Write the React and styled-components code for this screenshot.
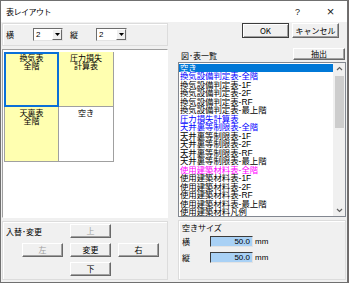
import React from 'react'
import styled, { createGlobalStyle } from 'styled-components'

const GlobalStyle = createGlobalStyle`
  html, body {
    margin: 0;
    padding: 0;
    background: #6f6a6a;
  }
  body {
    font-family: "Noto Sans CJK JP", "Liberation Sans", sans-serif;
  }
`

/*---------------------------------------------------------------
 *  Dialog frame: a white title bar over a grey body with two
 *  columns. Group boxes use an etched grey/white border.
 * -------------------------------------------------------------- */

const StWindow = styled.div`
  width: 346px;
  height: 281px;
  border: 1px solid #707070;
  background: #f0f0f0;
  display: flex;
  flex-direction: column;
  font-size: 8px;
  color: #000;
`

const StTitleBar = styled.div`
  height: 21px;
  background: #fff;
  display: flex;
  align-items: center;
  padding-left: 5px;
`

const StTitle = styled.span`
  font-size: 8px;
  letter-spacing: -0.5px;
`

const StCaptionButton = styled.span`
  width: 33px;
  text-align: center;
  font-size: ${props => props.size}px;
  font-family: "Liberation Sans", sans-serif;
  color: #222;
  margin-left: ${props => props.first ? 'auto' : '0'};
`

const StBody = styled.div`
  flex: 1;
  display: flex;
  padding-left: 1px;
  gap: 10px;
`

const StLeftColumn = styled.div`
  width: 166px;
  display: flex;
  flex-direction: column;
`

const StRightColumn = styled.div`
  width: 168px;
  display: flex;
  flex-direction: column;
`

const StGroup = styled.div`
  box-sizing: border-box;
  height: ${props => props.h}px;
  margin-top: ${props => props.mt}px;
  border: 1px solid #dcdcdc;
  box-shadow: inset 1px 1px 0 #fff;
`

const StSizeRow = styled.div`
  display: flex;
  align-items: center;
  height: 100%;
  padding-left: 3px;
`

const StLabel = styled.span`
  font-size: 8px;
  line-height: 9px;
  white-space: nowrap;
  margin-left: ${props => props.ml || 0}px;
  width: ${props => props.w ? props.w + 'px' : 'auto'};
`

const StSelect = styled.div`
  box-sizing: border-box;
  width: ${props => props.w}px;
  height: 13px;
  margin-left: ${props => props.ml}px;
  background: #fff;
  border: 1px solid;
  border-color: #6d6d6d #e3e3e3 #e3e3e3 #6d6d6d;
  display: flex;
  align-items: center;
  font-size: 8px;
  font-family: "Liberation Sans", sans-serif;
  padding-left: 2px;
`

const StDropArrow = styled.span`
  margin-left: auto;
  width: 10px;
  height: 11px;
  box-sizing: border-box;
  background: #f0f0f0;
  border: 1px solid;
  border-color: #fff #696969 #696969 #fff;
  display: flex;
  align-items: center;
  justify-content: center;
`

const StLayoutPanel = styled.div`
  box-sizing: border-box;
  height: 169px;
  margin-top: 3px;
  background: #fff;
  border: 1px solid;
  border-color: #a0a0a0 #fff #fff #a0a0a0;
  padding: 2px 0 0 1px;
`

const StCellGrid = styled.div`
  display: grid;
  grid-template-columns: 55px 55px;
  grid-template-rows: 55px 55px;
  width: 110px;
`

const StCell = styled.div`
  box-sizing: border-box;
  background: ${props => props.filled ? '#ffffb0' : '#fff'};
  border-right: 1px solid #a0a0a0;
  border-bottom: 1px solid #a0a0a0;
  border-left: ${props => props.edge ? '1px solid #a0a0a0' : 'none'};
  outline: ${props => props.active ? '2px solid #0a6fd8' : 'none'};
  outline-offset: -2px;
  text-align: center;
  font-size: 8px;
  line-height: 7.5px;
  padding-top: 2px;
  white-space: pre-line;
`

const StSwapGroup = styled(StGroup)`
  display: grid;
  grid-template-columns: 9px 41px 41px 41px;
  grid-template-rows: 14px 14px 14px;
  column-gap: 7px;
  row-gap: 5px;
  padding: 2px 0 0 3px;
`

const StSwapLabel = styled.span`
  grid-column: 1 / 3;
  grid-row: 1;
  align-self: center;
  font-size: 8px;
`

const StButton = styled.div`
  box-sizing: border-box;
  width: ${props => props.w ? props.w + 'px' : 'auto'};
  height: ${props => props.h || 14}px;
  grid-column: ${props => props.col || 'auto'};
  grid-row: ${props => props.row || 'auto'};
  display: flex;
  align-items: center;
  justify-content: center;
  background: #f0f0f0;
  border: 1px solid;
  border-color: ${props => props.primary ? '#3c3c3c' : '#fff #696969 #696969 #fff'};
  box-shadow: ${props => props.primary ? 'inset 1px 1px 0 #fff, inset -1px -1px 0 #a0a0a0' : 'inset -1px -1px 0 #a0a0a0'};
  color: ${props => props.disabled ? '#a0a0a0' : '#000'};
  font-size: 8px;
  line-height: 1;
`

const StButtonRow = styled.div`
  height: 15px;
  margin-top: 1px;
  display: flex;
  justify-content: flex-end;
  gap: 3px;
  padding-right: 7px;
`

const StListHeader = styled.div`
  height: 13px;
  margin-top: 9px;
  display: flex;
  align-items: flex-end;
  justify-content: space-between;
  padding-left: 3px;
  padding-right: 1px;
`

const StListBox = styled.div`
  box-sizing: border-box;
  height: 155px;
  margin-top: 2px;
  background: #fff;
  border: 1px solid #828790;
  display: flex;
`

const StItems = styled.div`
  flex: 1;
  padding-top: 0.5px;
`

const StItem = styled.div`
  height: 8.5px;
  line-height: 8.5px;
  font-family: "Liberation Sans", "Noto Sans CJK JP", sans-serif;
  font-size: 8.4px;
  white-space: nowrap;
  color: ${props => props.selected ? '#fff' : props.color};
  background: ${props => props.selected ? '#0078d7' : 'transparent'};
  padding-left: 1px;
`

const StScrollBar = styled.div`
  width: 12px;
  background: #f0f0f0;
  display: flex;
  flex-direction: column;
`

const StScrollArrow = styled.div`
  height: 11px;
  display: flex;
  align-items: center;
  justify-content: center;
`

const StScrollTrack = styled.div`
  flex: 1;
`

const StScrollThumb = styled.div`
  height: 52px;
  margin: 2px 1px 0 2px;
  background: #cdcdcd;
`

const StSizeGroup = styled(StGroup)`
  display: flex;
  flex-direction: column;
  padding: 2px 0 0 3px;
`

const StFieldRow = styled.div`
  display: flex;
  align-items: center;
  height: 11px;
  margin-top: ${props => props.mt}px;
`

const StNumberField = styled.div`
  box-sizing: border-box;
  width: 43px;
  height: 11px;
  background: #a9d1f5;
  border: 1px solid;
  border-color: #3c3c3c #e3e3e3 #e3e3e3 #3c3c3c;
  text-align: right;
  padding-right: 2px;
  font-family: "Liberation Sans", sans-serif;
  font-size: 8px;
  line-height: 9px;
`

const StUnit = styled.span`
  margin-left: 2px;
  font-family: "Liberation Sans", sans-serif;
  font-size: 8px;
`

const items = [
  { text: '空き', color: '#000', selected: true },
  { text: '換気設備判定表-全階', color: '#0000ff' },
  { text: '換気設備判定表-1F', color: '#000' },
  { text: '換気設備判定表-2F', color: '#000' },
  { text: '換気設備判定表-RF', color: '#000' },
  { text: '換気設備判定表-最上階', color: '#000' },
  { text: '圧力損失計算表', color: '#0000ff' },
  { text: '天井裏等制限表-全階', color: '#0000ff' },
  { text: '天井裏等制限表-1F', color: '#000' },
  { text: '天井裏等制限表-2F', color: '#000' },
  { text: '天井裏等制限表-RF', color: '#000' },
  { text: '天井裏等制限表-最上階', color: '#000' },
  { text: '使用建築材料表-全階', color: '#ff00ff' },
  { text: '使用建築材料表-1F', color: '#000' },
  { text: '使用建築材料表-2F', color: '#000' },
  { text: '使用建築材料表-RF', color: '#000' },
  { text: '使用建築材料表-最上階', color: '#000' },
  { text: '使用建築材料凡例', color: '#000' }
]

function Dropdown({ w, ml }) {
  return (
    <StSelect w={w} ml={ml}>
      2
      <StDropArrow>
        <svg width="5" height="3" viewBox="0 0 5 3">
          <path d="M0 0h5L2.5 3z" fill="#000" />
        </svg>
      </StDropArrow>
    </StSelect>
  )
}

function Chevron({ down }) {
  return (
    <svg width="7" height="5" viewBox="0 0 7 5">
      <path d={down ? 'M1 1l2.5 2.5L6 1' : 'M1 4l2.5-2.5L6 4'} fill="none" stroke="#606060" strokeWidth="1.2" />
    </svg>
  )
}

export default function App() {
  return (
    <>
      <GlobalStyle />
      <StWindow>
        <StTitleBar>
          <StTitle>表レイアウト</StTitle>
          <StCaptionButton first size={9}>?</StCaptionButton>
          <StCaptionButton size={13}>×</StCaptionButton>
        </StTitleBar>
        <StBody>
          <StLeftColumn>
            <StGroup h={23} mt={1}>
              <StSizeRow>
                <StLabel>横</StLabel>
                <Dropdown w={30} ml={19} />
                <StLabel ml={7}>縦</StLabel>
                <Dropdown w={31} ml={18} />
              </StSizeRow>
            </StGroup>
            <StLayoutPanel>
              <StCellGrid>
                <StCell filled active edge>{'換気表\n全階'}</StCell>
                <StCell filled>{'圧力損失\n計算表'}</StCell>
                <StCell filled edge>{'天裏表\n全階'}</StCell>
                <StCell>空き</StCell>
              </StCellGrid>
            </StLayoutPanel>
            <StSwapGroup h={59} mt={3}>
              <StSwapLabel>入替･変更</StSwapLabel>
              <StButton col={3} row={1} disabled>上</StButton>
              <StButton col={2} row={2} disabled>左</StButton>
              <StButton col={3} row={2}>変更</StButton>
              <StButton col={4} row={2}>右</StButton>
              <StButton col={3} row={3}>下</StButton>
            </StSwapGroup>
          </StLeftColumn>
          <StRightColumn>
            <StButtonRow>
              <StButton w={47} h={15} primary>OK</StButton>
              <StButton w={47} h={15}>キャンセル</StButton>
            </StButtonRow>
            <StListHeader>
              <StLabel>図･表一覧</StLabel>
              <StButton w={52} h={12}>抽出</StButton>
            </StListHeader>
            <StListBox>
              <StItems>
                {items.map(item => (
                  <StItem key={item.text} color={item.color} selected={item.selected}>
                    {item.text}
                  </StItem>
                ))}
              </StItems>
              <StScrollBar>
                <StScrollArrow><Chevron /></StScrollArrow>
                <StScrollTrack>
                  <StScrollThumb />
                </StScrollTrack>
                <StScrollArrow><Chevron down /></StScrollArrow>
              </StScrollBar>
            </StListBox>
            <StSizeGroup h={60} mt={3}>
              <StLabel>空きサイズ</StLabel>
              <StFieldRow mt={4}>
                <StLabel w={28}>横</StLabel>
                <StNumberField>50.0</StNumberField>
                <StUnit>mm</StUnit>
              </StFieldRow>
              <StFieldRow mt={5}>
                <StLabel w={28}>縦</StLabel>
                <StNumberField>50.0</StNumberField>
                <StUnit>mm</StUnit>
              </StFieldRow>
            </StSizeGroup>
          </StRightColumn>
        </StBody>
      </StWindow>
    </>
  )
}
